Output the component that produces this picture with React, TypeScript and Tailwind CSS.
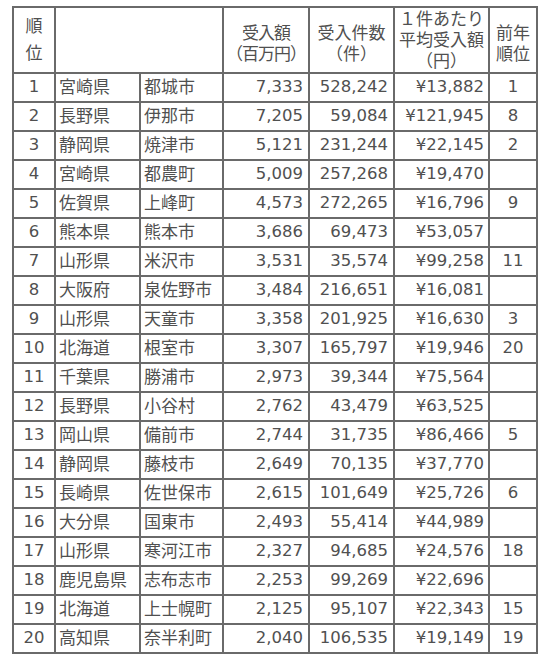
const rows: [number, string, string, string, string, string, string][] = [
  [1, "宮崎県", "都城市", "7,333", "528,242", "¥13,882", "1"],
  [2, "長野県", "伊那市", "7,205", "59,084", "¥121,945", "8"],
  [3, "静岡県", "焼津市", "5,121", "231,244", "¥22,145", "2"],
  [4, "宮崎県", "都農町", "5,009", "257,268", "¥19,470", ""],
  [5, "佐賀県", "上峰町", "4,573", "272,265", "¥16,796", "9"],
  [6, "熊本県", "熊本市", "3,686", "69,473", "¥53,057", ""],
  [7, "山形県", "米沢市", "3,531", "35,574", "¥99,258", "11"],
  [8, "大阪府", "泉佐野市", "3,484", "216,651", "¥16,081", ""],
  [9, "山形県", "天童市", "3,358", "201,925", "¥16,630", "3"],
  [10, "北海道", "根室市", "3,307", "165,797", "¥19,946", "20"],
  [11, "千葉県", "勝浦市", "2,973", "39,344", "¥75,564", ""],
  [12, "長野県", "小谷村", "2,762", "43,479", "¥63,525", ""],
  [13, "岡山県", "備前市", "2,744", "31,735", "¥86,466", "5"],
  [14, "静岡県", "藤枝市", "2,649", "70,135", "¥37,770", ""],
  [15, "長崎県", "佐世保市", "2,615", "101,649", "¥25,726", "6"],
  [16, "大分県", "国東市", "2,493", "55,414", "¥44,989", ""],
  [17, "山形県", "寒河江市", "2,327", "94,685", "¥24,576", "18"],
  [18, "鹿児島県", "志布志市", "2,253", "99,269", "¥22,696", ""],
  [19, "北海道", "上士幌町", "2,125", "95,107", "¥22,343", "15"],
  [20, "高知県", "奈半利町", "2,040", "106,535", "¥19,149", "19"],
];

const cell = "border-2 border-[#6a6a6a] h-[29px] p-0";
const head = "border-2 border-[#6a6a6a] font-normal p-0 text-center leading-[21px] whitespace-nowrap";

export default function App() {
  return (
    <div className="bg-white w-[550px] h-[662px] pl-[12px] pt-[6px] text-[#505050] text-[17px] leading-none [font-family:'DejaVu_Sans','Noto_Sans_CJK_JP',sans-serif]">
      <table className="table-fixed border-collapse w-[524px]">
        <colgroup>
          <col className="w-[42px]" />
          <col className="w-[85px]" />
          <col className="w-[83px]" />
          <col className="w-[86px]" />
          <col className="w-[85px]" />
          <col className="w-[95px]" />
          <col className="w-[48px]" />
        </colgroup>
        <thead>
          <tr className="h-[66px]">
            <th className="border-2 border-[#6a6a6a] font-normal p-0 text-center leading-[27px]">
              順<br />位
            </th>
            <th colSpan={2} className="border-2 border-[#6a6a6a] p-0" />
            <th className={`${head} pt-[8px] tracking-[-1px]`}>
              受入額<br />（百万円）
            </th>
            <th className={`${head} pt-[8px]`}>
              受入件数<br />（件）
            </th>
            <th className={head}>
              １件あたり<br />平均受入額<br />（円）
            </th>
            <th className={`${head} pt-[8px]`}>
              前年<br />順位
            </th>
          </tr>
        </thead>
        <tbody>
          {rows.map(([rank, pref, city, amount, count, avg, prev]) => (
            <tr key={rank}>
              <td className={`${cell} text-center text-[16.5px]`}>{rank}</td>
              <td className={`${cell} pl-[3px] whitespace-nowrap`}>{pref}</td>
              <td className={`${cell} pl-[3px] whitespace-nowrap`}>{city}</td>
              <td className={`${cell} text-right pr-[5px] text-[16.5px]`}>{amount}</td>
              <td className={`${cell} text-right pr-[5px] text-[16.5px]`}>{count}</td>
              <td className={`${cell} text-right pr-[4px] text-[16.5px] whitespace-nowrap`}>{avg}</td>
              <td className={`${cell} text-center text-[16.5px]`}>{prev}</td>
            </tr>
          ))}
        </tbody>
      </table>
    </div>
  );
}
